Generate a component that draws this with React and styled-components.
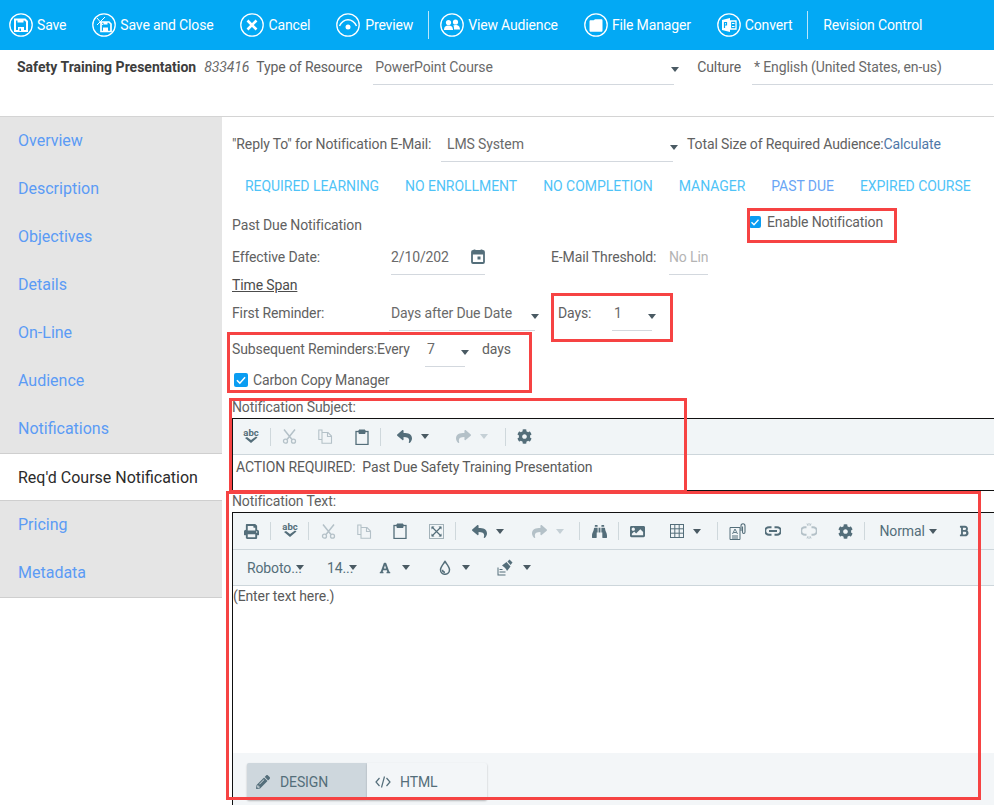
import styled, { createGlobalStyle } from "styled-components"
import { FaPrint, FaReply, FaShare, FaCog, FaBinoculars, FaImage, FaFont, FaPencilAlt, FaBold } from "react-icons/fa"

const GlobalStyle = createGlobalStyle`
	html, body { margin: 0; padding: 0; height: 805px; overflow: hidden; background: #fff; }
	#root { height: 805px; overflow: hidden; }
	* { box-sizing: border-box; }
	body { font-family: Roboto, "Liberation Sans", sans-serif; font-size: 14px; letter-spacing: -0.12px; color: #616161; }
`

const TopBar = styled.div`
	display: flex;
	align-items: center;
	height: 50px;
	background: #03a9f4;
	padding-left: 9px;
	color: #fff;
	letter-spacing: -0.15px;
`

const TopItem = styled.div`
	display: flex;
	align-items: center;
	gap: ${p => p.$gap ?? 4}px;
	margin-right: ${p => p.$mr ?? 26}px;
	white-space: nowrap;
`

const TopDivider = styled.div`
	width: 1px;
	height: 28px;
	background: #b9e6fc;
	margin-right: ${p => p.$mr ?? 11}px;
`

const HeaderRow = styled.div`
	display: flex;
	align-items: flex-start;
	height: 67px;
	padding-left: 17px;
	border-bottom: 1px solid #d4d4d4;
`

const Title = styled.b`
	font-weight: 700;
	color: #3d3d3d;
	line-height: 35px;
	margin-right: 8px;
	white-space: nowrap;
	letter-spacing: 0;
`

const ResId = styled.i`
	line-height: 35px;
	margin-right: 7px;
	color: #6a6a6a;
`

const Label = styled.span`
	display: inline-block;
	width: ${p => (p.$w ? `${p.$w}px` : "auto")};
	margin-left: ${p => p.$ml ?? 0}px;
	margin-right: ${p => p.$mr ?? 0}px;
	margin-bottom: ${p => p.$mb ?? 0}px;
	flex-shrink: 0;
	white-space: nowrap;
`

const HeaderLabel = styled(Label)`
	line-height: 35px;
`

const Field = styled.div`
	display: flex;
	align-items: center;
	justify-content: ${p => (p.$spread ? "space-between" : "flex-start")};
	height: ${p => p.$h ?? 36}px;
	width: ${p => p.$w}px;
	flex-shrink: 0;
	padding-left: ${p => p.$pl ?? 2}px;
	border-bottom: 1px solid #d3d8de;
	white-space: nowrap;
	overflow: hidden;
	color: ${p => (p.$muted ? "#b4b4b4" : "#6a6a6a")};
`

const Arrow = styled.span`
	display: inline-block;
	flex-shrink: 0;
	width: 0;
	height: 0;
	border-left: 4px solid transparent;
	border-right: 4px solid transparent;
	border-top: 5px solid ${p => (p.$off ? "#c5d0d6" : "#4a5a63")};
	margin-left: ${p => p.$ml ?? -4}px;
	margin-right: ${p => p.$mr ?? 0}px;
	margin-top: ${p => p.$mt ?? 6}px;
`

const Body = styled.div`
	display: grid;
	grid-template-columns: 222px 1fr;
	position: relative;
`

const Sidebar = styled.nav`
	align-self: start;
	background: #e5e5e5;
	border-bottom: 1px solid #cfcfcf;
`

const SideItem = styled.div`
	display: flex;
	align-items: center;
	height: 48px;
	padding-left: 18px;
	padding-bottom: ${p => (p.$active ? 0 : 2)}px;
	font-size: 16px;
	letter-spacing: 0;
	color: ${p => (p.$active ? "#2b2b2b" : "#5b9bf5")};
	background: ${p => (p.$active ? "#fff" : "transparent")};
	border-top: ${p => (p.$active ? "1px solid #cfcfcf" : "0")};
	border-bottom: ${p => (p.$active ? "1px solid #cfcfcf" : "0")};
`

const Main = styled.main`
	padding: 9px 0 0 10px;
	min-width: 0;
`

const Row = styled.div`
	display: flex;
	align-items: center;
	height: ${p => p.$h}px;
	white-space: nowrap;
`

const LinkText = styled.span`
	color: #4f78a8;
`

const Tabs = styled.div`
	display: flex;
	align-items: center;
	gap: 26px;
	height: 48px;
	padding-left: 13px;
	letter-spacing: -0.05px;
`

const Tab = styled.span`
	color: ${p => (p.$active ? "#6aa5f5" : "#4fc3f7")};
`

const Check = styled.span`
	display: inline-flex;
	align-items: center;
	justify-content: center;
	width: ${p => p.$size}px;
	height: ${p => p.$size}px;
	border-radius: 2px;
	background: #0a9df2;
	margin-left: ${p => p.$ml ?? 0}px;
	margin-right: ${p => p.$mr ?? 5}px;
	margin-bottom: ${p => p.$mb ?? 0}px;
	flex-shrink: 0;
`

const Underlined = styled.span`
	text-decoration: underline;
	color: #4c4c4c;
`

const SectionLabel = styled.div`
	display: flex;
	align-items: flex-end;
	height: ${p => p.$h}px;
	padding-bottom: ${p => p.$pb ?? 0}px;
	line-height: 18px;
`

const Editor = styled.div`
	width: 800px;
	height: ${p => p.$h}px;
	border: 1px solid #111;
	background: #fff;
	display: flex;
	flex-direction: column;
`

const EdRow = styled.div`
	display: flex;
	align-items: center;
	flex-shrink: 0;
	height: ${p => p.$h ?? 36}px;
	background: #f1f5f7;
	border-bottom: 1px solid #cdd6db;
	color: #546e7a;
`

const EdBtn = styled.div`
	display: flex;
	align-items: center;
	justify-content: ${p => (p.$pl !== undefined ? "flex-start" : "center")};
	width: ${p => p.$w ?? 36}px;
	height: 100%;
	padding-left: ${p => p.$pl ?? 0}px;
	flex-shrink: 0;
	font-size: ${p => p.$fs ?? 15}px;
	color: ${p => (p.$off ? "#b4c1c8" : "#546e7a")};
`

const EdSep = styled.div`
	width: 1px;
	height: 18px;
	margin: 0 0.75px;
	background: #cfd8dc;
	flex-shrink: 0;
`

const EdText = styled.div`
	padding: ${p => p.$pad};
	flex: 1;
	color: #5a5a5a;
	line-height: 18px;
`

const EdFoot = styled.div`
	background: #f3f6f8;
	height: 52px;
	padding: 10px 0 0 14px;
	flex-shrink: 0;
	display: flex;
`

const ModeBtn = styled.div`
	display: flex;
	align-items: center;
	gap: ${p => (p.$active ? 10 : 9)}px;
	width: 120px;
	height: 37px;
	padding-left: ${p => (p.$active ? 9 : 8)}px;
	background: ${p => (p.$active ? "#ced7dd" : "#f3f6f8")};
	color: #546e7a;
	border-radius: ${p => (p.$active ? "2px 0 0 2px" : "0 2px 2px 0")};
	box-shadow: 0 1px 2px rgba(0, 0, 0, 0.25);
`

const Highlight = styled.div`
	position: absolute;
	top: ${p => p.$y - 117}px;
	left: ${p => p.$x}px;
	width: ${p => p.$w}px;
	height: ${p => p.$h}px;
	border: 3px solid #f64343;
	pointer-events: none;
`

const Ring = ({ children }) => (
	<svg width="24" height="24" viewBox="0 0 24 24" fill="none">
		<circle cx="12" cy="12" r="11.2" stroke="#fff" strokeWidth="1.3" />
		{children}
	</svg>
)

const SaveIcon = () => (
	<Ring>
		<path d="M6 6.5h10l2 2V18H6z" stroke="#fff" strokeWidth="2" />
		<path d="M8.500 6.500h6v3h-6z" fill="#fff" />
		<path d="M9 14h6v4H9z" fill="#fff" />
		<path d="M10.500 15.500h1.500v2.500h-1.500z" fill="#03a9f4" />
	</Ring>
)

const SaveCloseIcon = () => (
	<Ring>
		<path d="M9 9h8l2 2v7.500H9z" stroke="#fff" strokeWidth="1.700" />
		<path d="M11 14.500h5v4h-5z" fill="#fff" />
		<path d="M11.500 9h4v2.500h-4z" fill="#fff" />
		<path d="M5 5l6 7M5 12l8-8" stroke="#fff" strokeWidth="1" />
	</Ring>
)

const CancelIcon = () => (
	<Ring>
		<path d="M7.500 7.500l9 9M16.500 7.500l-9 9" stroke="#fff" strokeWidth="2.600" />
	</Ring>
)

const PreviewIcon = () => (
	<Ring>
		<path d="M3.500 13C6 8 9 6.800 12 6.800S18 8 20.500 13" stroke="#fff" strokeWidth="1.400" />
		<circle cx="12" cy="14" r="2.500" fill="#fff" />
	</Ring>
)

const AudienceIcon = () => (
	<Ring>
		<circle cx="8.500" cy="9.500" r="2.600" fill="#fff" />
		<circle cx="15.500" cy="9" r="2.600" fill="#fff" />
		<path d="M4 17c0-3.500 2-4.600 4.500-4.600S13 13.500 13 17z" fill="#fff" />
		<path d="M14 16.500h6c0-3.500-2-4.600-4.500-4.600-1 0-1.700.2-2.300.5 .9.9 .8 2.500.8 4.100z" fill="#fff" />
	</Ring>
)

const FolderIcon = () => (
	<Ring>
		<path d="M5.500 8.500c0-.8.5-1.300 1.200-1.300h3l1.300-1h6.300c.8 0 1.200.5 1.200 1.200v10.100c0 .8-.5 1.300-1.200 1.300H6.700c-.7 0-1.200-.5-1.200-1.300z" fill="#fff" />
	</Ring>
)

const ConvertIcon = () => (
	<Ring>
		<path d="M5 7l8-2v14l-8-2z" fill="#fff" />
		<path d="M13.500 8h5.500v8h-5.500z" stroke="#fff" strokeWidth="1.300" />
		<path d="M7.500 9v6M7.500 9.500h2v2.500h-2" stroke="#03a9f4" strokeWidth="1.200" />
		<path d="M15 10.500h2.500M15 13.500h2.500" stroke="#fff" strokeWidth="1.200" />
	</Ring>
)

const CalendarIcon = () => (
	<svg width="14" height="15" viewBox="0 0 14 15" fill="none">
		<path d="M3.500 0.500v2M10.500 0.500v2" stroke="#546e7a" strokeWidth="1.800" />
		<rect x="1" y="2" width="12" height="12" rx="1" stroke="#546e7a" strokeWidth="1.800" />
		<path d="M1 3h12v2.500H1z" fill="#546e7a" />
		<rect x="6.500" y="7.500" width="3" height="3" fill="#546e7a" />
	</svg>
)

// froala's spell check icon, not in any icon set
const SpellIcon = () => (
	<svg width="18" height="18" viewBox="0 0 18 18">
		<text x="9" y="8" textAnchor="middle" fontFamily="Roboto, sans-serif" fontWeight="700" fontSize="9.500" letterSpacing="0" fill="#546e7a">abc</text>
		<path d="M3 10l6 5 6.500-5.500-1.500-1-5 3.500-4-3z" fill="#546e7a" />
	</svg>
)

const CutIcon = () => (
	<svg width="15" height="15" viewBox="0 0 15 15" fill="none" stroke="currentColor" strokeWidth="1.300">
		<path d="M2 0.500l8 10M13 0.500l-8 10" strokeWidth="1.500" />
		<circle cx="3.500" cy="12.200" r="2" />
		<circle cx="11.500" cy="12.200" r="2" />
	</svg>
)

const CopyIcon = () => (
	<svg width="15" height="15" viewBox="0 0 15 15" fill="none" stroke="currentColor" strokeWidth="1.100">
		<path d="M4 3V1H0.800v9.500H4" />
		<path d="M4 3.500h6l3.500 3.500v7.200H4z" />
		<path d="M9.500 3.500v4h4" />
	</svg>
)

const ClipboardIcon = () => (
	<svg width="14" height="16" viewBox="0 0 14 16" fill="none" stroke="currentColor">
		<rect x="1" y="2.500" width="12" height="13" strokeWidth="1.300" />
		<path d="M4 1h6v3.500H4z" fill="currentColor" strokeWidth="1" />
	</svg>
)

const SelectAllIcon = () => (
	<svg width="15" height="15" viewBox="0 0 15 15" fill="none">
		<rect x="0.500" y="0.500" width="14" height="14" stroke="#546e7a" strokeDasharray="1 1" />
		<path d="M3 3l9 9M12 3l-9 9" stroke="#546e7a" strokeWidth="1.200" />
		<path d="M2.500 2.500h3l-3 3zM12.500 2.500v3l-3-3zM2.500 12.500v-3l3 3zM12.500 12.500h-3l3-3z" fill="#546e7a" />
	</svg>
)

const TableIcon = () => (
	<svg width="14" height="14" viewBox="0 0 14 14" fill="none" stroke="#546e7a" strokeWidth="1">
		<rect x="0.500" y="0.500" width="13" height="13" />
		<path d="M4.800 0.500v13M9.200 0.500v13M0.500 4.800h13M0.500 9.200h13" />
	</svg>
)

const FileIcon = () => (
	<svg width="17" height="17" viewBox="0 0 17 17" fill="none" stroke="#546e7a">
		<path d="M1 4.500h10v12H1z" />
		<path d="M3 13h6M3 15h6" />
		<path d="M3.500 11l2.500-5 2.500 5M4.500 9.500h3" strokeWidth="0.900" />
		<path d="M12 8V3c0-3 4-3 4 0v6c0 2-2.500 2-2.500 0V3.500" strokeWidth="1.100" />
	</svg>
)

const LinkIcon = () => (
	<svg width="16" height="10" viewBox="0 0 16 10" fill="none" stroke="currentColor" strokeWidth="2">
		<path d="M6.500 1.200H4a3.800 3.800 0 0 0 0 7.600h2.500M9.500 1.200H12a3.800 3.800 0 0 1 0 7.600H9.500" />
		<path d="M4 5h8" />
	</svg>
)

const UnlinkIcon = () => (
	<svg width="16" height="16" viewBox="0 0 16 16" fill="none" stroke="currentColor">
		<path d="M5.500 4.200H4a3.800 3.800 0 0 0 0 7.600h1.500M10.500 4.200H12a3.800 3.800 0 0 1 0 7.600h-1.500" strokeWidth="2" />
		<path d="M6 0.500l.8 2.200M10 0.500l-.8 2.200M8 0v2.500M6 15.500l.8-2.200M10 15.500l-.8-2.200M8 16v-2.500" strokeWidth="1" />
	</svg>
)

const DropIcon = () => (
	<svg width="12" height="15" viewBox="0 0 12 15" fill="none" stroke="#546e7a" strokeWidth="1.500">
		<path d="M6 1.500C4 4.500 1.500 7 1.500 9.800a4.500 4.500 0 0 0 9 0C10.500 7 8 4.500 6 1.500z" />
		<path d="M3.500 9.800a2.500 2.500 0 0 0 2.500 2.500" />
	</svg>
)

const BrushIcon = () => (
	<svg width="16" height="17" viewBox="0 0 16 17" fill="#546e7a">
		<path d="M5 6.500l4.500-3.500 4 4.500-3.500 4.500c-1-2.500-2.500-4-5-5.500z" />
		<path d="M10.500 2.500l2-2 3 3-2 2.500z" />
		<path d="M0.500 8.500h1v8h-1zM0.500 15.500h8v1h-8zM2.500 12.500h6v1h-6zM2.500 10h3v1h-3z" />
	</svg>
)

const CodeIcon = () => (
	<svg width="16" height="14" viewBox="0 0 16 14" fill="none" stroke="#546e7a" strokeWidth="1.200">
		<path d="M4.500 3L1 7l3.500 4M11.500 3L15 7l-3.500 4M9.500 1.500l-3 11" />
	</svg>
)

const CheckMark = ({ size }) => (
	<svg width={size} height={size} viewBox="0 0 12 12" fill="none">
		<path d="M2.500 6.200l2.500 2.500 4.500-5" stroke="#fff" strokeWidth="1.300" />
	</svg>
)

const sideLinks = ["Overview", "Description", "Objectives", "Details", "On-Line", "Audience", "Notifications", "Req'd Course Notification", "Pricing", "Metadata"]
const tabs = ["REQUIRED LEARNING", "NO ENROLLMENT", "NO COMPLETION", "MANAGER", "PAST DUE", "EXPIRED COURSE"]

const DropBtn = ({ w, pl, off, fs, children, gap = 9 }) => (
	<EdBtn $w={w} $pl={pl} $off={off} $fs={fs}>
		{children}
		<Arrow $ml={gap} $mt={0} $off={off} />
	</EdBtn>
)

export default function App() {
	return (
		<>
			<GlobalStyle />
			<TopBar>
				<TopItem><SaveIcon />Save</TopItem>
				<TopItem><SaveCloseIcon />Save and Close</TopItem>
				<TopItem $gap={5}><CancelIcon />Cancel</TopItem>
				<TopItem $gap={5} $mr={15}><PreviewIcon />Preview</TopItem>
				<TopDivider />
				<TopItem><AudienceIcon />View Audience</TopItem>
				<TopItem><FolderIcon />File Manager</TopItem>
				<TopItem $mr={15}><ConvertIcon />Convert</TopItem>
				<TopDivider $mr={15} />
				<TopItem>Revision Control</TopItem>
			</TopBar>

			<HeaderRow>
				<Title>Safety Training Presentation</Title>
				<ResId>833416</ResId>
				<HeaderLabel $mr={11}>Type of Resource</HeaderLabel>
				<Field $w={301} $h={35}>PowerPoint Course</Field>
				<Arrow $ml={-3} $mr={18} $mt={17} />
				<HeaderLabel $mr={11}>Culture</HeaderLabel>
				<Field $w={241} $h={35}>* English (United States, en-us)</Field>
			</HeaderRow>

			<Body>
				<Sidebar>
					{sideLinks.map(name => (
						<SideItem key={name} $active={name.startsWith("Req")}>{name}</SideItem>
					))}
				</Sidebar>

				<Main>
					<Row $h={36}>
						<Label $w={209}>"Reply To" for Notification E-Mail:</Label>
						<Field $w={232} $pl={6}>LMS System</Field>
						<Arrow $ml={-3} $mr={9} />
						<span>Total Size of Required Audience:<LinkText>Calculate</LinkText></span>
					</Row>

					<Tabs>
						{tabs.map(t => <Tab key={t} $active={t === "PAST DUE"}>{t}</Tab>)}
					</Tabs>

					<Row $h={29}>
						<Label $w={517}>Past Due Notification</Label>
						<Check $size={12} $mb={5} $mr={6}><CheckMark size={12} /></Check>
						<Label $mb={6}>Enable Notification</Label>
					</Row>

					<Row $h={36}>
						<Label $w={159}>Effective Date:</Label>
						<Field $w={94} $pl={0} $spread>2/10/202<CalendarIcon /></Field>
						<Label $ml={66} $w={118}>E-Mail Threshold:</Label>
						<Field $w={39} $muted $pl={0}>No Lin</Field>
					</Row>

					<Row $h={20}><Underlined>Time Span</Underlined></Row>

					<Row $h={36}>
						<Label $w={157}>First Reminder:</Label>
						<Field $w={146}>Days after Due Date</Field>
						<Arrow $mr={19} />
						<Label $w={54}>Days:</Label>
						<Field $w={40}>1</Field>
						<Arrow />
					</Row>

					<Row $h={36}>
						<Label $w={193}>Subsequent Reminders:Every</Label>
						<Field $w={40}>7</Field>
						<Arrow $mr={13} />
						<span>days</span>
					</Row>

					<Row $h={26}>
						<Check $size={14} $ml={2} $mr={5}><CheckMark size={14} /></Check>
						<span>Carbon Copy Manager</span>
					</Row>

					<SectionLabel $h={25} $pb={2}>Notification Subject:</SectionLabel>
					<Editor $h={73}>
						<EdRow>
							<EdBtn><SpellIcon /></EdBtn>
							<EdSep />
							<EdBtn $off><CutIcon /></EdBtn>
							<EdBtn $off><CopyIcon /></EdBtn>
							<EdBtn><ClipboardIcon /></EdBtn>
							<EdSep />
							<DropBtn w={59} pl={15}><FaReply /></DropBtn>
							<DropBtn w={63} pl={15} off><FaShare /></DropBtn>
							<EdSep />
							<EdBtn><FaCog /></EdBtn>
						</EdRow>
						<EdText $pad="3px 0 0 3px">ACTION REQUIRED:&nbsp; Past Due Safety Training Presentation</EdText>
					</Editor>

					<SectionLabel $h={21} $pb={2}>Notification Text:</SectionLabel>
					<Editor $h={294}>
						<EdRow $h={37}>
							<EdBtn><FaPrint /></EdBtn>
							<EdSep />
							<EdBtn><SpellIcon /></EdBtn>
							<EdSep />
							<EdBtn $off><CutIcon /></EdBtn>
							<EdBtn $off><CopyIcon /></EdBtn>
							<EdBtn><ClipboardIcon /></EdBtn>
							<EdBtn><SelectAllIcon /></EdBtn>
							<EdSep />
							<DropBtn w={60} pl={15}><FaReply /></DropBtn>
							<DropBtn w={62} pl={15} off><FaShare /></DropBtn>
							<EdSep />
							<EdBtn><FaBinoculars /></EdBtn>
							<EdSep />
							<EdBtn><FaImage /></EdBtn>
							<DropBtn w={61} pl={14}><TableIcon /></DropBtn>
							<EdSep />
							<EdBtn><FileIcon /></EdBtn>
							<EdBtn><LinkIcon /></EdBtn>
							<EdBtn $off><UnlinkIcon /></EdBtn>
							<EdBtn><FaCog /></EdBtn>
							<EdSep />
							<DropBtn w={80} pl={14} gap={4} fs={14}><Label>Normal</Label></DropBtn>
							<EdBtn $fs={12}><FaBold /></EdBtn>
						</EdRow>
						<EdRow $h={36}>
							<DropBtn w={72} pl={14} gap={-6} fs={14}><Label>Roboto...</Label></DropBtn>
							<DropBtn w={72} pl={22} gap={-4} fs={14}><Label>14...</Label></DropBtn>
							<DropBtn w={60} pl={2} gap={11} fs={12}><FaFont /></DropBtn>
							<DropBtn w={60} pl={2} gap={11}><DropIcon /></DropBtn>
							<DropBtn w={60} pl={0} gap={10}><BrushIcon /></DropBtn>
						</EdRow>
						<EdText $pad="1px 0 0 0">(Enter text here.)</EdText>
						<EdFoot>
							<ModeBtn $active><FaPencilAlt />DESIGN</ModeBtn>
							<ModeBtn><CodeIcon />HTML</ModeBtn>
						</EdFoot>
					</Editor>
				</Main>

				<Highlight $x={747} $y={208} $w={150} $h={35} />
				<Highlight $x={551} $y={293} $w={122} $h={49} />
				<Highlight $x={227} $y={332} $w={305} $h={61} />
				<Highlight $x={229} $y={398} $w={458} $h={95} />
				<Highlight $x={226} $y={491} $w={755} $h={309} />
			</Body>
		</>
	)
}
